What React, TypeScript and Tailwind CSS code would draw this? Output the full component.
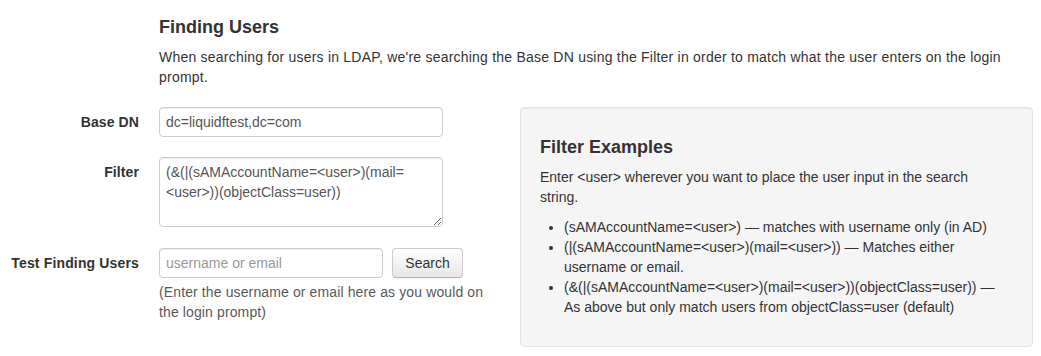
import React from "react";

export default function App() {
  return (
    <div className="w-[1041px] h-[356px] overflow-hidden bg-white font-['Liberation_Sans',Arial,sans-serif] text-[14px] leading-[20px] text-[#333]">
      <div className="pt-[17px]">
        <div className="ml-[159px] w-[874px]">
          <h4 className="text-[18px] leading-[20px] font-bold">Finding Users</h4>
          <p className="mt-[10px] tracking-[0.22px]">
            When searching for users in LDAP, we're searching the Base DN using the Filter in order to match what the user enters on the login
            <br />
            prompt.
          </p>
        </div>
        <div className="flex mt-[20px]">
          <div className="w-[500px] flex flex-col">
            <div className="flex items-start">
              <label className="w-[139px] text-right font-bold pt-[5px] tracking-[0.1px]">Base DN</label>
              <input
                className="ml-[20px] w-[284px] h-[30px] px-[6px] border border-[#ccc] rounded-[4px] text-[#555] outline-none shadow-[inset_0_1px_1px_rgba(0,0,0,0.075)]"
                defaultValue="dc=liquidftest,dc=com"
              />
            </div>
            <div className="flex items-start mt-[20px]">
              <label className="w-[139px] text-right font-bold pt-[5px] tracking-[0.1px]">Filter</label>
              <textarea
                className="ml-[20px] w-[284px] h-[70px] px-[6px] py-[4px] border border-[#ccc] rounded-[4px] text-[#555] outline-none shadow-[inset_0_1px_1px_rgba(0,0,0,0.075)]"
                defaultValue="(&(|(sAMAccountName=<user>)(mail=<user>))(objectClass=user))"
              />
            </div>
            <div className="flex items-start mt-[21px]">
              <label className="w-[139px] text-right font-bold pt-[5px] tracking-[0.15px]">Test Finding Users</label>
              <div className="ml-[20px] flex flex-col">
                <div className="flex items-center">
                  <input
                    className="w-[224px] h-[30px] px-[6px] border border-[#ccc] rounded-[4px] text-[#555] placeholder:text-[#999] outline-none shadow-[inset_0_1px_1px_rgba(0,0,0,0.075)]"
                    placeholder="username or email"
                  />
                  <button className="ml-[9px] w-[71px] h-[30px] border border-[#ccc] border-b-[#b3b3b3] rounded-[4px] bg-gradient-to-b from-white to-[#e6e6e6] text-[#333] shadow-[inset_0_1px_0_rgba(255,255,255,0.2),0_1px_2px_rgba(0,0,0,0.05)]">
                    Search
                  </button>
                </div>
                <p className="mt-[4px] text-[#595959] tracking-[0.12px]">
                  (Enter the username or email here as you would on
                  <br />
                  the login prompt)
                </p>
              </div>
            </div>
          </div>
          <div className="ml-[20px] w-[513px] h-[240px] border border-[#e3e3e3] bg-[#f5f5f5] rounded-[4px] p-[19px] shadow-[inset_0_1px_1px_rgba(0,0,0,0.05)]">
            <h4 className="mt-[10px] mb-[10px] text-[18px] leading-[20px] font-bold">Filter Examples</h4>
            <p className="mb-[10px]">
              Enter &lt;user&gt; wherever you want to place the user input in the search
              <br />
              string.
            </p>
            <ul className="list-disc pl-[24px]">
              <li>(sAMAccountName=&lt;user&gt;) — matches with username only (in AD)</li>
              <li>
                (|(sAMAccountName=&lt;user&gt;)(mail=&lt;user&gt;)) — Matches either
                <br />
                username or email.
              </li>
              <li>
                (&amp;(|(sAMAccountName=&lt;user&gt;)(mail=&lt;user&gt;))(objectClass=user)) —
                <br />
                As above but only match users from objectClass=user (default)
              </li>
            </ul>
          </div>
        </div>
      </div>
    </div>
  );
}
